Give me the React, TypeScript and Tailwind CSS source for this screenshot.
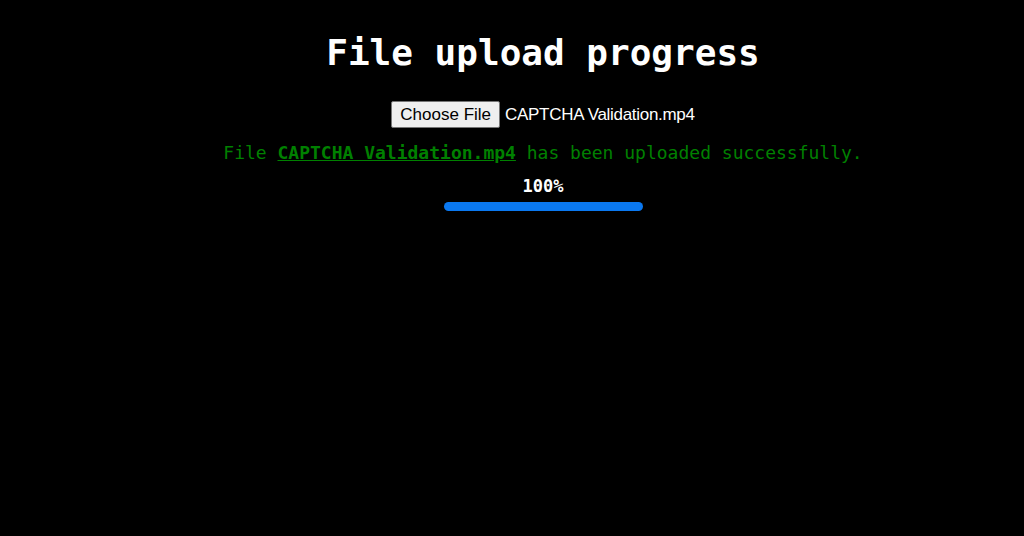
export default function App() {
  return (
    <div className="w-[1024px] h-[536px] bg-black overflow-hidden pl-[62px]">
      <div className="flex flex-col items-center">
        <h1 className="mt-[31px] text-white font-bold text-[36px] leading-[44px] [font-family:'DejaVu_Sans_Mono','Liberation_Mono',monospace]">
          File upload progress
        </h1>
        <div className="mt-[26px] flex items-center [font-family:'Liberation_Sans',Arial,sans-serif] text-[17px]">
          <button className="h-[27px] px-[8px] bg-[#efefef] text-black border border-[#767676] rounded-[2px] leading-none">
            Choose File
          </button>
          <span className="ml-[5px] text-white tracking-[-0.3px]">CAPTCHA Validation.mp4</span>
        </div>
        <p className="mt-[13px] text-[#008000] text-[18px] leading-[24px] [font-family:'DejaVu_Sans_Mono','Liberation_Mono',monospace]">
          File <a className="underline font-bold">CAPTCHA Validation.mp4</a> has been uploaded successfully.
        </p>
        <div className="mt-[10px] text-white font-bold text-[17px] leading-[22px] [font-family:'DejaVu_Sans_Mono','Liberation_Mono',monospace]">
          100%
        </div>
        <div className="mt-[5px] w-[199px] h-[9px] bg-[#0a78f0] rounded-full" />
      </div>
    </div>
  );
}
